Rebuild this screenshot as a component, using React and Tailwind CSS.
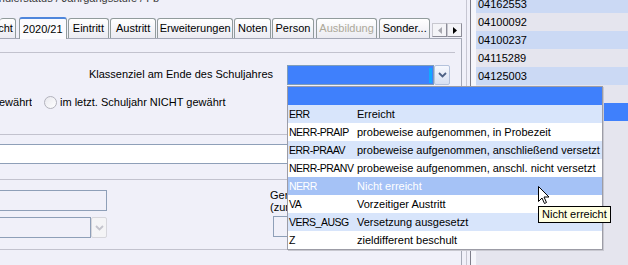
import React from 'react'

const tabs = [
  { label: 'cht', w: 'w-[16px]', ml: 'ml-0', clip: true },
  { label: '2020/21', w: 'w-[48px]', ml: 'ml-[3px]', sel: true },
  { label: 'Eintritt', w: 'w-[42px]', ml: 'ml-px' },
  { label: 'Austritt', w: 'w-[46px]', ml: 'ml-px' },
  { label: 'Erweiterungen', w: 'w-[77px]', ml: 'ml-px' },
  { label: 'Noten', w: 'w-[37px]', ml: 'ml-px' },
  { label: 'Person', w: 'w-[42px]', ml: 'ml-px' },
  { label: 'Ausbildung', w: 'w-[62px]', ml: 'ml-[2px]', disabled: true },
  { label: 'Sonder...', w: 'w-[51px]', ml: 'ml-[2px]' },
]

const listRows = [
  { id: '04162553', tone: 'blue' },
  { id: '04100092', tone: 'grey' },
  { id: '04100237', tone: 'blue' },
  { id: '04115289', tone: 'grey' },
  { id: '04125003', tone: 'blue' },
  { id: '04131877', tone: 'grey' },
  { id: '04140006', tone: 'sel' },
]

const options = [
  { code: '', text: '', tone: 'sel' },
  { code: 'ERR', text: 'Erreicht', tone: 'alt' },
  { code: 'NERR-PRAIP', text: 'probeweise aufgenommen, in Probezeit', tone: 'plain' },
  { code: 'ERR-PRAAV', text: 'probeweise aufgenommen, anschließend versetzt', tone: 'alt' },
  { code: 'NERR-PRANV', text: 'probeweise aufgenommen, anschl. nicht versetzt', tone: 'plain' },
  { code: 'NERR', text: 'Nicht erreicht', tone: 'hover' },
  { code: 'VA', text: 'Vorzeitiger Austritt', tone: 'plain' },
  { code: 'VERS_AUSG', text: 'Versetzung ausgesetzt', tone: 'alt' },
  { code: 'Z', text: 'zieldifferent beschult', tone: 'plain' },
]

const optionTone = {
  sel: 'bg-[#3f80fc] text-white',
  alt: 'bg-[#d8e5fb] text-black',
  plain: 'bg-white text-black',
  hover: 'bg-[#a5c2f6] text-white',
}

const rowTone = {
  blue: 'bg-[#cbd9f4] text-black',
  grey: 'bg-[#e5e5ee] text-black',
  sel: 'bg-[#3f80fc] text-white',
}

function Chevron({ color = '#4d6185' }) {
  return (
    <svg width="9" height="6" viewBox="0 0 9 6">
      <path d="M1 1 L4.5 4.5 L8 1" fill="none" stroke={color} strokeWidth="1.8" />
    </svg>
  )
}

function DropButton({ disabled }) {
  return (
    <div
      className={`w-[16px] h-full flex items-center justify-center rounded-[2px] border ${
        disabled ? 'border-[#d6d6dc] bg-[#f4f4f6]' : 'border-[#b4c2dc] bg-gradient-to-b from-[#f6f8fe] to-[#d8e0f2]'
      }`}
    >
      <Chevron color={disabled ? '#c4c4cc' : '#4d6185'} />
    </div>
  )
}

function TabStrip() {
  return (
    <div className="h-[21px] flex items-end">
      {tabs.map((t) =>
        t.sel ? (
          <div
            key={t.label}
            className={`${t.w} ${t.ml} relative z-10 h-[22px] -mb-px flex items-center justify-center rounded-t-[3px] border border-b-0 border-[#919b9c] border-t-2 border-t-[#4f86dc] bg-[#fbfbfe]`}
          >
            {t.label}
          </div>
        ) : (
          <div
            key={t.label}
            className={`${t.w} ${t.ml} h-[20px] flex items-center overflow-hidden whitespace-nowrap rounded-t-[3px] border-t border-r border-[#919b9c] bg-gradient-to-b from-white to-[#ebebf2] ${
              t.clip ? 'justify-end pr-[2px]' : 'justify-center border-l'
            } ${t.disabled ? 'text-[#aca899]' : ''}`}
          >
            {t.label}
          </div>
        )
      )}
      <div className="ml-[2px] mb-px flex">
        <div className="w-[15px] h-[14px] flex items-center justify-center border border-[#c8c8d0] border-r-[#8c8c98] border-b-[#8c8c98] bg-[#f4f4f8]">
          <svg width="4" height="7" viewBox="0 0 4 7"><path d="M4 0 L0 3.5 L4 7 Z" fill="#a8a8b0" /></svg>
        </div>
        <div className="w-[15px] h-[14px] flex items-center justify-center border border-[#c8c8d0] border-r-[#8c8c98] border-b-[#8c8c98] bg-[#f4f4f8]">
          <svg width="4" height="7" viewBox="0 0 4 7"><path d="M0 0 L4 3.5 L0 7 Z" fill="#000" /></svg>
        </div>
      </div>
    </div>
  )
}

export default function App() {
  return (
    <div className="relative w-[628px] h-[265px] overflow-hidden flex bg-[#f0f0f9] text-[11px] text-black font-['Liberation_Sans',Arial,sans-serif]">
      {/* editor side */}
      <div className="w-[462px] shrink-0 flex flex-col">
        <div className="h-[17px] overflow-hidden">
          <p className="-mt-[8px] -ml-[14px] leading-[13px] whitespace-nowrap text-[#3a3a3a]">
            Schülerstatus / Jahrgangsstufe / Fb
          </p>
        </div>
        <TabStrip />
        <div className="flex-1 border-t border-r border-[#a4a8b6]">
          {/* Klassenziel group */}
          <div className="mt-[13px] w-[455px] h-[83px] border-y border-[#c2c2ce]">
            <div className="pt-[12px] flex">
              <div className="w-[273px] text-right leading-[18px] whitespace-nowrap">Klassenziel am Ende des Schuljahres</div>
              <div className="ml-[14px] w-[163px] h-[20px] flex">
                <div className="flex-1 flex justify-end items-center pr-[1px] border border-[#7f9db9] bg-[#3f80fc]">
                  <div className="w-[3px] h-[15px] bg-[#13a8ff]" />
                </div>
                <DropButton />
              </div>
            </div>
            <div className="mt-[10px] h-[14px] flex items-center">
              <div className="w-[32px] flex justify-end overflow-hidden whitespace-nowrap">gewährt</div>
              <div className="ml-[12px] w-[13px] h-[13px] rounded-full border border-[#b2b2bc] bg-gradient-to-br from-[#e8e8ee] to-white" />
              <span className="ml-[3px] whitespace-nowrap">im letzt. Schuljahr NICHT gewährt</span>
            </div>
          </div>

          <div className="mt-[9px] -ml-px w-[456px] h-[20px] border border-[#8e9fb8] bg-white" />

          {/* lower group */}
          <div className="mt-[15px] w-[455px] h-[71px] border-y border-[#c2c2ce] flex">
            <div className="w-[108px] -ml-px flex flex-col">
              <div className="mt-[10px] h-[21px] border border-[#8e9fb8] bg-[#f0f0f9]" />
              <div className="mt-[6px] h-[21px] flex">
                <div className="flex-1 border border-[#8e9fb8] bg-[#f0f0f9]" />
                <DropButton disabled />
              </div>
            </div>
            <div className="ml-[163px] flex flex-col">
              <div className="mt-[9px] w-[17px] overflow-hidden leading-[12px] whitespace-nowrap">
                <div>Genehmigung</div>
                <div>(zum Besuch)</div>
              </div>
              <div className="mt-[3px] ml-[3px] w-[150px] h-[21px] border border-[#8e9fb8] bg-[#f0f0f9]" />
            </div>
          </div>
        </div>
      </div>

      {/* splitter */}
      <div className="w-[14px] shrink-0 flex">
        <div className="ml-[4px] w-px bg-[#c6c6d2]" />
        <div className="ml-[3px] w-px bg-[#7e7e8a]" />
        <div className="flex-1 bg-[#f6f6fb]" />
      </div>

      {/* id list */}
      <div className="flex-1 bg-[#e5e5ee]">
        <div className="-mt-[5px]">
          {listRows.map((r) => (
            <div key={r.id} className={`h-[18px] leading-[18px] pl-[2px] ${rowTone[r.tone]}`}>
              {r.id}
            </div>
          ))}
        </div>
      </div>

      {/* open dropdown */}
      <div className="absolute left-[287px] top-[86px] w-[316px] border border-[#9c9ca6] bg-white shadow-[1px_1px_0_#c8c8d0]">
        {options.map((o, i) => (
          <div key={i} className={`h-[18px] leading-[18px] flex whitespace-nowrap ${optionTone[o.tone]}`}>
            <span className="w-[69px] pl-[1px] text-[10.5px] tracking-[-0.5px]">{o.code}</span>
            <span>{o.text}</span>
          </div>
        ))}
      </div>

      {/* tooltip */}
      <div className="absolute left-[538px] top-[206px] h-[17px] px-[3px] leading-[15px] border border-black bg-[#ffffe1] whitespace-nowrap">
        Nicht erreicht
      </div>

      {/* mouse pointer */}
      <svg className="absolute left-[538px] top-[186px]" width="13" height="20" viewBox="0 0 13 20">
        <path d="M0.5 0.5 L0.5 15.5 L4 12 L6.5 17.5 L8.5 16.5 L6 11 L11 11 Z" fill="#fff" stroke="#000" strokeWidth="1" />
      </svg>
    </div>
  )
}
